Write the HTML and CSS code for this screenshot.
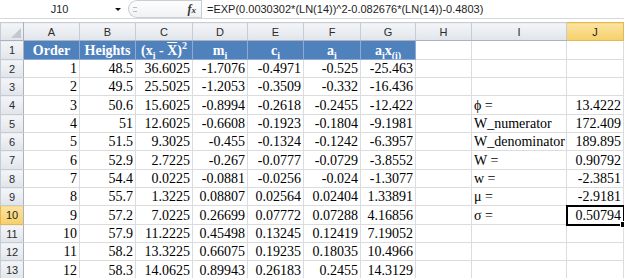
FILE: index.html
```html
<!DOCTYPE html>
<html lang="en">
<head>
  <meta charset="UTF-8">
  <title>Shapiro-Wilk W</title>
  <link rel="stylesheet" href="styles.css">
</head>
<body>
  <div class="formula-bar">
    <div class="name-box">J10<span class="drop"></span></div>
    <div class="fx-box">
      <span class="grip"></span>
      <span class="fx">f<i>x</i></span>
    </div>
    <div class="formula">=EXP(0.0030302*(LN(14))^2-0.082676*(LN(14))-0.4803)</div>
  </div>

  <table class="sheet">
    <colgroup>
      <col class="w-hdr">
      <col class="w-std"><col class="w-std"><col class="w-c"><col class="w-d"><col class="w-std">
      <col class="w-c"><col class="w-d"><col class="w-std"><col class="w-i"><col class="w-c">
    </colgroup>
    <tr class="letters">
      <th class="corner"><span class="tri"></span></th>
      <th>A</th><th>B</th><th>C</th><th>D</th><th>E</th><th>F</th><th>G</th><th>H</th><th>I</th><th class="on">J</th>
    </tr>
    <tr class="tall">
      <th>1</th>
      <td class="head">Order</td>
      <td class="head">Heights</td>
      <td class="head">(x<sub>i</sub> - <span class="bar">X</span>)<sup>2</sup></td>
      <td class="head">m<sub>i</sub></td>
      <td class="head">c<sub>i</sub></td>
      <td class="head">a<sub>i</sub></td>
      <td class="head">a<sub>i</sub>x<sub>(i)</sub></td>
      <td></td><td></td><td></td>
    </tr>
    <tr>
      <th>2</th>
      <td>1</td><td>48.5</td><td>36.6025</td><td>-1.7076</td><td>-0.4971</td><td>-0.525</td><td>-25.463</td>
      <td></td><td></td><td></td>
    </tr>
    <tr>
      <th>3</th>
      <td>2</td><td>49.5</td><td>25.5025</td><td>-1.2053</td><td>-0.3509</td><td>-0.332</td><td>-16.436</td>
      <td></td><td></td><td></td>
    </tr>
    <tr class="tall">
      <th>4</th>
      <td>3</td><td>50.6</td><td>15.6025</td><td>-0.8994</td><td>-0.2618</td><td>-0.2455</td><td>-12.422</td>
      <td></td><td class="label">ϕ =</td><td>13.4222</td>
    </tr>
    <tr>
      <th>5</th>
      <td>4</td><td>51</td><td>12.6025</td><td>-0.6608</td><td>-0.1923</td><td>-0.1804</td><td>-9.1981</td>
      <td></td><td class="label">W_numerator</td><td>172.409</td>
    </tr>
    <tr>
      <th>6</th>
      <td>5</td><td>51.5</td><td>9.3025</td><td>-0.455</td><td>-0.1324</td><td>-0.1242</td><td>-6.3957</td>
      <td></td><td class="label">W_denominator</td><td>189.895</td>
    </tr>
    <tr class="tall">
      <th>7</th>
      <td>6</td><td>52.9</td><td>2.7225</td><td>-0.267</td><td>-0.0777</td><td>-0.0729</td><td>-3.8552</td>
      <td></td><td class="label">W =</td><td>0.90792</td>
    </tr>
    <tr>
      <th>8</th>
      <td>7</td><td>54.4</td><td>0.0225</td><td>-0.0881</td><td>-0.0256</td><td>-0.024</td><td>-1.3077</td>
      <td></td><td class="label">w =</td><td>-2.3851</td>
    </tr>
    <tr>
      <th>9</th>
      <td>8</td><td>55.7</td><td>1.3225</td><td>0.08807</td><td>0.02564</td><td>0.02404</td><td>1.33891</td>
      <td></td><td class="label">μ =</td><td>-2.9181</td>
    </tr>
    <tr class="tall">
      <th class="on">10</th>
      <td>9</td><td>57.2</td><td>7.0225</td><td>0.26699</td><td>0.07772</td><td>0.07288</td><td>4.16856</td>
      <td></td><td class="label">σ =</td><td class="selected">0.50794</td>
    </tr>
    <tr>
      <th>11</th>
      <td>10</td><td>57.9</td><td>11.2225</td><td>0.45498</td><td>0.13245</td><td>0.12419</td><td>7.19052</td>
      <td></td><td></td><td></td>
    </tr>
    <tr>
      <th>12</th>
      <td>11</td><td>58.2</td><td>13.3225</td><td>0.66075</td><td>0.19235</td><td>0.18035</td><td>10.4966</td>
      <td></td><td></td><td></td>
    </tr>
    <tr class="tall">
      <th>13</th>
      <td>12</td><td>58.3</td><td>14.0625</td><td>0.89943</td><td>0.26183</td><td>0.2455</td><td>14.3129</td>
      <td></td><td></td><td></td>
    </tr>
  </table>
</body>
</html>
```

FILE: styles.css
```css
body {
  margin: 0;
  background: #fff;
  font-family: "Liberation Sans", Arial, sans-serif;
  overflow: hidden;
}

/* formula bar */
.formula-bar {
  display: flex;
  height: 18px;
  border-bottom: 1px solid #d5d9de;
  margin-bottom: 3px;
  font-size: 11px;
  color: #1e1e1e;
}

.name-box {
  position: relative;
  width: 125px;
  line-height: 18px;
  text-align: center;
  padding-right: 6px;
  box-sizing: border-box;
}

.drop {
  position: absolute;
  right: 4px;
  top: 8px;
  border-left: 3px solid transparent;
  border-right: 3px solid transparent;
  border-top: 3px solid #111;
}

.fx-box {
  display: flex;
  align-items: center;
  justify-content: space-between;
  width: 73px;
  margin-left: 3px;
  padding: 0 5px 0 4px;
  box-sizing: border-box;
  border: 1px solid #c9ced4;
  border-right: none;
  border-radius: 9px 0 0 9px;
  background: linear-gradient(#fdfdfd, #f1f2f4);
}

.grip {
  width: 4px;
  height: 3px;
  border-top: 1px solid #b8bec6;
  border-bottom: 1px solid #b8bec6;
}

.fx {
  font-family: "Liberation Serif", serif;
  font-style: italic;
  font-weight: bold;
  font-size: 12px;
  color: #333;
}

.fx i {
  font-size: 9px;
}

.formula {
  flex: 1;
  line-height: 18px;
  padding-left: 5px;
  border-left: 1px solid #c9ced4;
  white-space: nowrap;
}

/* sheet */
.sheet {
  border-collapse: collapse;
  table-layout: fixed;
  width: 624px;
  font-family: "Liberation Serif", "Times New Roman", serif;
  font-size: 14px;
}

.w-hdr { width: 23px; }
.w-std { width: 56px; }
.w-c { width: 57px; }
.w-d { width: 55px; }
.w-i { width: 95px; }

.sheet th {
  font-family: "Liberation Sans", Arial, sans-serif;
  font-weight: normal;
  font-size: 11px;
  color: #2b2b2b;
  background: linear-gradient(#f3f5f8, #e1e5ea);
  border: 1px solid #c6ccd4;
  text-align: center;
  padding: 0;
}

.letters th {
  height: 15px;
  border-bottom-color: #a9b2be;
}

.sheet tr > th:first-child {
  border-right-color: #a9b2be;
}

.sheet th.on {
  background: linear-gradient(#fbe3a0, #f6cf6a);
  border-color: #e5b751;
  color: #1e1e1e;
}

.corner {
  position: relative;
}

.tri {
  position: absolute;
  right: 2px;
  bottom: 2px;
  border-left: 10px solid transparent;
  border-bottom: 10px solid #c2c8d0;
}

.sheet tr {
  height: 18px;
}

.sheet tr.tall {
  height: 19px;
}

.sheet td {
  border: 1px solid #dadcdd;
  padding: 0 2px;
  text-align: right;
  vertical-align: bottom;
  line-height: 16px;
  white-space: nowrap;
  overflow: hidden;
}

.sheet td.head {
  background: #4f81bd;
  color: #fff;
  font-weight: bold;
  text-align: center;
  border-color: #8eaad3;
}

.sheet td.label {
  text-align: left;
}

.head sub,
.head sup {
  font-size: 10px;
  line-height: 0;
}

.bar {
  text-decoration: overline;
}

.sheet td.selected {
  position: relative;
  outline: 2px solid #000;
  outline-offset: -1px;
  overflow: visible;
}

.sheet td.selected::after {
  content: "";
  position: absolute;
  right: -4px;
  bottom: -4px;
  width: 5px;
  height: 5px;
  background: #000;
  border: 1px solid #fff;
}
```
